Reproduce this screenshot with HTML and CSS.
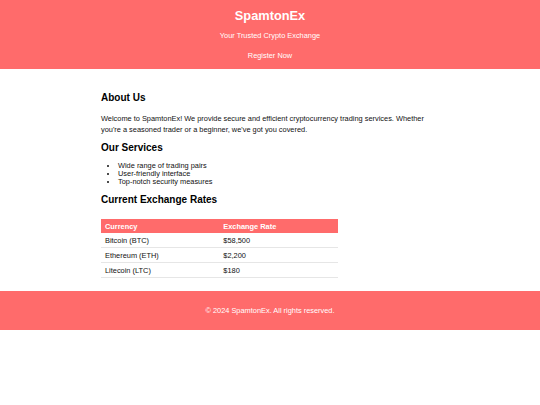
FILE: index.html
```html
<!DOCTYPE html>
<html lang="en">
<head>
<meta charset="utf-8">
<title>SpamtonEx</title>
<link rel="stylesheet" href="styles.css">
</head>
<body>
<header class="site-header">
  <h1 class="brand">SpamtonEx</h1>
  <p class="tagline">Your Trusted Crypto Exchange</p>
  <a class="register" href="#">Register Now</a>
</header>
<main class="container">
  <section class="about">
    <h2 class="section-title">About Us</h2>
    <p class="text">Welcome to SpamtonEx! We provide secure and efficient cryptocurrency trading services. Whether you're a seasoned trader or a beginner, we've got you covered.</p>
  </section>
  <section class="services">
    <h2 class="section-title">Our Services</h2>
    <ul class="service-list">
      <li>Wide range of trading pairs</li>
      <li>User-friendly interface</li>
      <li>Top-notch security measures</li>
    </ul>
  </section>
  <section class="rates">
    <h2 class="section-title rates-title">Current Exchange Rates</h2>
    <table class="rate-table">
      <thead>
        <tr><th>Currency</th><th>Exchange Rate</th></tr>
      </thead>
      <tbody>
        <tr><td>Bitcoin (BTC)</td><td>$58,500</td></tr>
        <tr><td>Ethereum (ETH)</td><td>$2,200</td></tr>
        <tr><td>Litecoin (LTC)</td><td>$180</td></tr>
      </tbody>
    </table>
  </section>
</main>
<footer class="site-footer">
  <p class="copyright">&copy; 2024 SpamtonEx. All rights reserved.</p>
</footer>
</body>
</html>
```
FILE: styles.css
```css
html, body {
  margin: 0;
  padding: 0;
  background: #ffffff;
  font-family: "Liberation Sans", Arial, sans-serif;
  color: #111;
}

.site-header {
  background: #ff6b6b;
  color: #fff;
  text-align: center;
  padding: 8px 0 9px;
  display: flex;
  flex-direction: column;
  align-items: center;
}

.brand {
  margin: 0;
  font-size: 12.8px;
  line-height: 15px;
  font-weight: bold;
}

.tagline {
  margin: 7.5px 0 0;
  font-size: 7.4px;
  line-height: 9px;
}

.register {
  margin-top: 11.5px;
  font-size: 7.4px;
  line-height: 9px;
  color: #fff;
  text-decoration: none;
}

.container {
  width: 338px;
  margin: 0 auto;
  padding-top: 23px;
  padding-bottom: 13px;
}

.section-title {
  margin: 0;
  font-size: 10px;
  line-height: 12px;
  font-weight: bold;
  color: #000;
}

.text {
  margin: 8.5px 0 7.5px;
  font-size: 7.4px;
  line-height: 11px;
  color: #111;
}

.service-list {
  margin: 8px 0 8px;
  padding-left: 17px;
  font-size: 7.4px;
  line-height: 8px;
}

.rates-title {
  margin-bottom: 13px;
}

.rate-table {
  width: 70%;
  border-collapse: collapse;
  font-size: 7.4px;
  table-layout: fixed;
}

.rate-table th {
  background: #ff6b6b;
  color: #fff;
  text-align: left;
  font-weight: bold;
  height: 14px;
  padding: 0 4px;
}

.rate-table td {
  height: 14px;
  padding: 0 4px;
  border-bottom: 1px solid #e6e6e6;
}

.site-footer {
  background: #ff6b6b;
  color: #fff;
  text-align: center;
  height: 39px;
  display: flex;
  align-items: center;
  justify-content: center;
}

.copyright {
  margin: 0;
  font-size: 7.4px;
}
```
